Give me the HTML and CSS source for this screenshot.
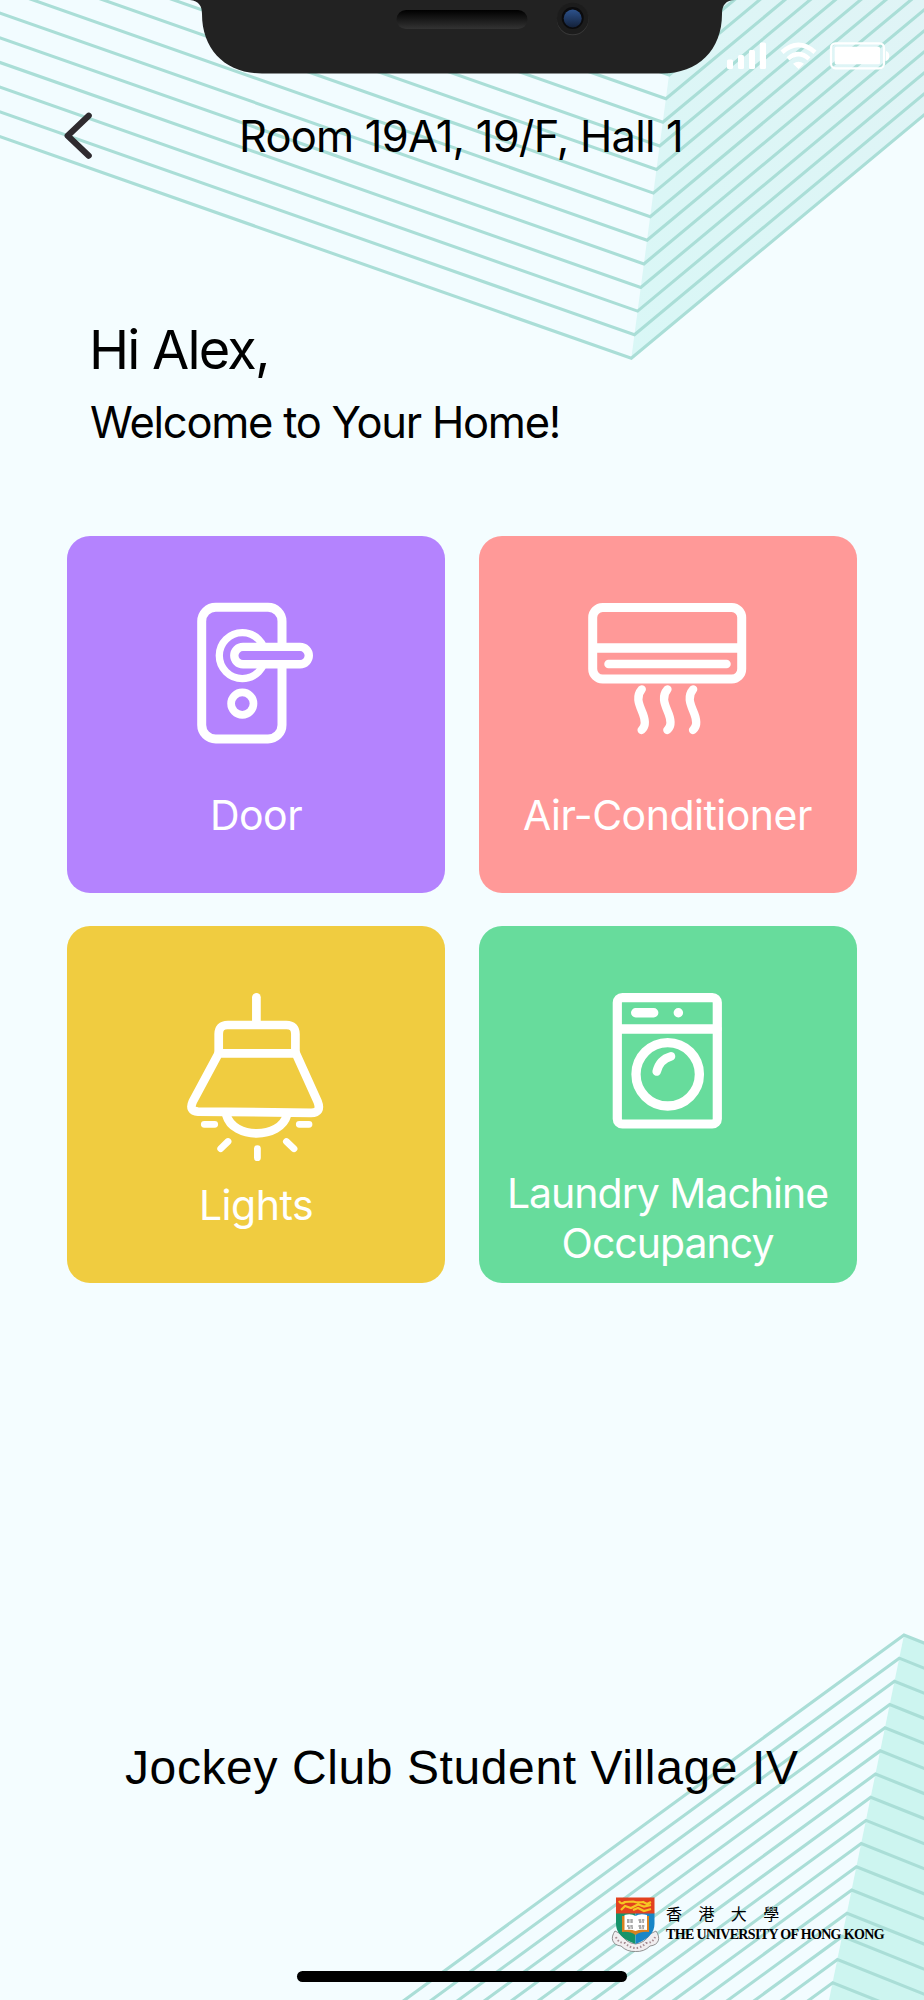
FILE: index.html
```html
<!DOCTYPE html>
<html lang="en">
<head>
    <meta charset="UTF-8">
    <meta name="viewport" content="width=device-width, initial-scale=1.0">
    <title>My Room</title>
    <link rel="stylesheet" href="styles.css">
</head>
<body>
    <div class="screen">
        <!-- Background lines -->
        <svg class="backdrop" viewBox="0 0 924 2000" aria-hidden="true">
            <defs>
                <path id="top-line" d="M-100 101.5L631.3 358.3L934 106.7"/>
                <g id="top-four">
                    <use href="#top-line"/>
                    <use href="#top-line" x="3.15" y="-23.6"/>
                    <use href="#top-line" x="6.3" y="-47.2"/>
                    <use href="#top-line" x="9.45" y="-70.8"/>
                </g>
                <path id="bottom-line" d="M380 2018L904 1635L1010 1677.4"/>
                <g id="bottom-four">
                    <use href="#bottom-line"/>
                    <use href="#bottom-line" x="-4.75" y="23.18"/>
                    <use href="#bottom-line" x="-9.5" y="46.36"/>
                    <use href="#bottom-line" x="-14.25" y="69.54"/>
                </g>
                <linearGradient id="side" x1="0" y1="1" x2="1" y2="0">
                    <stop offset="0" stop-color="#d9f7f6"/>
                    <stop offset="1" stop-color="#e0f4f6"/>
                </linearGradient>
            </defs>
            <path class="face" d="M0 0H679L631.3 358.3L0 136.7Z"/>
            <path fill="url(#side)" d="M679 0H924V115L631.3 358.3Z"/>
            <path class="face" d="M904 1635L832 2000H405Z"/>
            <path class="face-dark" d="M904 1635L924 1643V2000H829Z"/>
            <g class="lines">
                <use href="#top-four"/>
                <use href="#top-four" x="12.6" y="-94.4"/>
                <use href="#top-four" x="25.2" y="-188.8"/>
                <use href="#top-four" x="37.8" y="-283.2"/>
                <use href="#bottom-four"/>
                <use href="#bottom-four" x="-19" y="92.7"/>
                <use href="#bottom-four" x="-38" y="185.4"/>
                <use href="#bottom-four" x="-57" y="278.2"/>
            </g>
        </svg>

        <!-- Notch and status icons -->
        <svg class="status-bar" viewBox="0 0 924 90" aria-hidden="true">
            <defs>
                <linearGradient id="speaker" x1="0" y1="0" x2="0" y2="1">
                    <stop offset="0" stop-color="#000"/>
                    <stop offset="1" stop-color="#333"/>
                </linearGradient>
                <linearGradient id="lens" x1="0" y1="0" x2="0" y2="1">
                    <stop offset="0" stop-color="#2d528c"/>
                    <stop offset="1" stop-color="#13213a"/>
                </linearGradient>
            </defs>
            <path fill="#222" d="M190 0C199 1 202 6 202 14C202 50 226 73.5 262 73.5H662C698 73.5 722 50 722 14C722 5 726 0 735 0Z"/>
            <rect x="396.5" y="10" width="131" height="19" rx="9.5" fill="url(#speaker)"/>
            <circle cx="572.7" cy="19.5" r="15.8" fill="#3a3a3a"/>
            <circle cx="572.7" cy="18.5" r="15.8" fill="#1c1c1c"/>
            <circle cx="572.7" cy="18" r="11" fill="#0b0b0d"/>
            <circle cx="572.7" cy="18.5" r="9" fill="url(#lens)"/>
            <g fill="#fff">
                <rect x="727" y="59.5" width="6" height="9.5" rx="1.5"/>
                <rect x="738" y="55" width="6" height="14" rx="1.5"/>
                <rect x="749" y="50" width="6" height="19" rx="1.5"/>
                <rect x="759.8" y="42.5" width="6.2" height="26.5" rx="1.5"/>
                <path d="M798.5 69L793 63.7Q798.5 60 804 63.7Z"/>
                <rect x="834.7" y="46.7" width="45.3" height="17.6" rx="1.5"/>
                <path d="M886 51Q889.3 52 889.3 56Q889.3 60 886 61Z"/>
            </g>
            <g fill="none" stroke="#fff">
                <path stroke-width="4.6" d="M782 52.3Q798.5 37.5 815 52.3"/>
                <path stroke-width="4.4" d="M788 58.8Q798.5 49.5 809 58.8"/>
                <rect x="831" y="43.3" width="53" height="25" rx="4.5" stroke-width="2.2"/>
            </g>
        </svg>

        <!-- Header -->
        <div class="header">
            <a href="#" class="back" aria-label="Back">
                <svg width="32" height="50" viewBox="0 0 32 50">
                    <path d="M26.7 4.7L5.7 24.8L26.7 44.7"/>
                </svg>
            </a>
            <h1 class="room">Room 19A1, 19/F, Hall 1</h1>
        </div>

        <!-- Greeting -->
        <div class="greeting">
            <h2>Hi Alex,</h2>
            <p>Welcome to Your Home!</p>
        </div>

        <!-- Room controls -->
        <div class="controls">
            <a href="#" class="card door">
                <svg class="icon" viewBox="0 0 200 180">
                    <rect x="45.7" y="11.3" width="80.3" height="131.7" rx="14" stroke-width="9"/>
                    <circle cx="86.3" cy="59.6" r="23" stroke-width="7.3"/>
                    <rect class="handle" x="78.3" y="50.9" width="74.5" height="17.4" rx="8.7" stroke-width="8.4"/>
                    <circle cx="86.3" cy="107.6" r="11.2" stroke-width="7.7"/>
                </svg>
                <span class="label">Door</span>
            </a>
            <a href="#" class="card air">
                <svg class="icon" viewBox="0 0 200 180">
                    <rect x="24.7" y="11.6" width="149" height="71.4" rx="10" stroke-width="9"/>
                    <path stroke-width="9.6" d="M26 52H172"/>
                    <path stroke-width="8.5" d="M40.5 68H158.5"/>
                    <path stroke-width="8.3" d="M73.8 93.3C67 101 71.5 109 75 118C78 126 77 131 73.6 134"/>
                    <path stroke-width="8.3" d="M99.5 93.3C92.7 101 97.2 109 100.7 118C103.7 126 102.7 131 99.3 134"/>
                    <path stroke-width="8.3" d="M125.2 93.3C118.4 101 122.9 109 126.4 118C129.4 126 128.4 131 125 134"/>
                </svg>
                <span class="label">Air-Conditioner</span>
            </a>
            <a href="#" class="card lights">
                <svg class="icon" viewBox="0 0 200 180">
                    <path stroke-width="8.7" d="M100.4 11.3V37"/>
                    <path stroke-width="8.7" d="M62.7 67.3V48Q62.7 39 71.7 39H130.4Q139.4 39 139.4 48V67.3"/>
                    <path stroke-width="8.7" d="M62.7 67.3H139.8L161.6 115.5Q166 126.8 155 126.8L42 125.6Q32.5 125 36.8 115.5Z"/>
                    <path stroke-width="8.7" d="M70.4 129C77 153.5 124.5 153.5 131 129"/>
                    <path stroke-width="6.8" d="M48.3 138.3H58.7M143.3 138.3H153M72 155.5L64.7 162.7M130.4 155.5L138 162.7M101.4 162.6V171.7"/>
                </svg>
                <span class="label">Lights</span>
            </a>
            <a href="#" class="card laundry">
                <svg class="icon" viewBox="0 0 200 180">
                    <rect x="49.3" y="11.6" width="100" height="126.4" rx="5" stroke-width="9.2"/>
                    <path stroke-width="9.4" d="M50 43H149"/>
                    <path stroke-width="9.4" d="M67.7 26.7H85.7M110.3 26.7H110.4"/>
                    <circle cx="99.7" cy="88.3" r="31.7" stroke-width="9.3"/>
                    <path stroke-width="8.6" d="M88.7 85.5Q91.5 73.5 103 70.3"/>
                </svg>
                <span class="label">Laundry Machine Occupancy</span>
            </a>
        </div>

        <!-- Footer -->
        <div class="footer">
            <p class="village">Jockey Club Student Village IV</p>
            <div class="university">
                <svg class="crest" width="49" height="56" viewBox="0 0 49 56" aria-hidden="true">
                    <path d="M4 34C-1 41 1 48 10 49Q16 55 24.5 54.5Q33 55 39 49C48 48 50 41 45 34L39 37Q34 46 24.5 47Q15 46 10 37Z" fill="#f1eef0" stroke="#777" stroke-width=".8"/>
                    <path d="M5 40Q7 46 14 46Q19 51 24.5 51Q30 51 35 46Q42 46 44 40" fill="none" stroke="#a88e94" stroke-width="2" stroke-dasharray="1.5 2"/>
                    <path d="M5 16H24.5V47Q5 40 5 27Z" fill="#15936a"/>
                    <path d="M43.5 16H24.5V47Q43.5 40 43.5 27Z" fill="#1786c7"/>
                    <path d="M5 .5H43.5V16.5H5Z" fill="#e2411f"/>
                    <path d="M8 4Q10 8 14 5L22 4.5Q27 6 32 5L36 7L40 5M10 13L14 9L20 11L27 7.5L33 9.5L40 8M22 13L27 11L33 14L40 12" fill="none" stroke="#f6c623" stroke-width="2.2"/>
                    <path d="M11 19H38V35Q30 34 24.5 38Q19 34 11 35Z" fill="#d98220"/>
                    <path d="M13.5 18Q20 16 24.5 19Q29 16 36 18V33Q29 32 24.5 34Q20 32 13.5 33Z" fill="#fff"/>
                    <path d="M16 23H22.5M16 25H22M27.5 23H33.5M28 25H33M16 29H22.5M17 31H22M27.5 29H33.5M28 31H33" stroke="#555" stroke-width="1.2" stroke-dasharray="2.5 .8"/>
                </svg>
                <div class="university-name">
                    <span class="name-zh" lang="zh-Hant">香港大學</span>
                    <span class="name-en">THE UNIVERSITY OF HONG KONG</span>
                </div>
            </div>
            <div class="home-bar"></div>
        </div>
    </div>
</body>
</html>
```
FILE: styles.css
```css
/* Basic Reset */
* {
    box-sizing: border-box;
}

body {
    margin: 0;
    font-family: Inter, "Liberation Sans", sans-serif;
    background-color: #f4fdff;
    color: #000;
}

h1, h2, p {
    margin: 0;
    font-weight: 400;
}

a {
    color: inherit;
    text-decoration: none;
}

.screen {
    position: relative;
    z-index: 0;
    width: 924px;
    height: 2000px;
    overflow: hidden;
}

/* Background */
.backdrop {
    position: absolute;
    top: 0;
    left: 0;
    z-index: -1;
    width: 924px;
    height: 2000px;
}

.face {
    fill: #f2fcff;
}

.face-dark {
    fill: #cdf5f0;
}

.lines {
    fill: none;
    stroke: #aaded7;
    stroke-width: 3.1;
}

.status-bar {
    display: block;
    width: 924px;
    height: 90px;
}

/* Header */
.header {
    display: flex;
    align-items: center;
    height: 60px;
    margin-top: 16px;
    padding-left: 62px;
}

.back {
    display: flex;
}

.back path {
    fill: none;
    stroke: #2f2b2f;
    stroke-width: 6.2;
    stroke-linecap: round;
    stroke-linejoin: round;
}

.room {
    margin-left: 145px;
    font-size: 43.5px;
    line-height: 60px;
    letter-spacing: -0.8px;
    white-space: nowrap;
}

/* Greeting */
.greeting {
    display: flex;
    flex-direction: column;
    gap: 12px;
    padding: 154px 0 0 89px;
}

.greeting h2 {
    font-size: 54px;
    line-height: 60px;
    letter-spacing: -1.8px;
}

.greeting p {
    padding-left: 1px;
    font-size: 43.5px;
    line-height: 60px;
    letter-spacing: -1.25px;
}

/* Room controls */
.controls {
    display: grid;
    grid-template-columns: 378px 378px;
    grid-auto-rows: 357px;
    gap: 33.5px;
    padding: 83.5px 67px 0;
}

.card {
    display: flex;
    flex-direction: column;
    align-items: center;
    padding-top: 60px;
    border-radius: 23px;
    color: #fff;
}

.door {
    background-color: #b483fe;
}

.air {
    background-color: #ff9998;
}

.lights {
    background-color: #f0cc40;
}

.laundry {
    background-color: #67dc9c;
}

.icon {
    flex: none;
    width: 200px;
    height: 180px;
    fill: none;
    stroke: #fff;
    stroke-linecap: round;
    stroke-linejoin: round;
}

.handle {
    fill: #b483fe;
}

.label {
    margin-top: 14px;
    font-size: 41px;
    line-height: 50px;
    letter-spacing: -0.5px;
    text-align: center;
}

.laundry .label {
    margin-top: 1.5px;
    letter-spacing: -1px;
}

/* Footer */
.footer {
    padding-top: 455px;
}

.village {
    padding-left: 125px;
    font-family: "Liberation Sans", Arial, sans-serif;
    font-size: 48px;
    line-height: 60px;
    letter-spacing: 0.6px;
    white-space: nowrap;
}

.university {
    display: flex;
    gap: 6px;
    height: 56px;
    margin: 99px 0 0 611px;
}

.university-name {
    display: flex;
    flex-direction: column;
    padding-top: 6px;
    white-space: nowrap;
}

.name-zh {
    font-family: "Noto Sans CJK TC", sans-serif;
    font-size: 16px;
    line-height: 20px;
    letter-spacing: 16.4px;
}

.name-en {
    margin-top: 2px;
    font-family: "Liberation Serif", "Times New Roman", serif;
    font-size: 14px;
    font-weight: 700;
    line-height: 20px;
    letter-spacing: -0.65px;
}

.home-bar {
    width: 330px;
    height: 11.5px;
    margin: 17.5px 0 0 297px;
    border-radius: 6px;
    background-color: #000;
}
```
